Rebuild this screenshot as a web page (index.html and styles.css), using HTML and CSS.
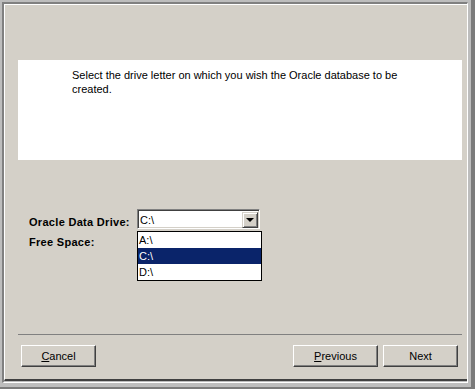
FILE: index.html
```html
<!DOCTYPE html>
<html lang="en">
<head>
    <meta charset="UTF-8">
    <meta name="viewport" content="width=device-width, initial-scale=1.0">
    <title>Oracle Data Drive</title>
    <link rel="stylesheet" href="styles.css">
</head>
<body>

    <!-- Window frame -->
    <div class="window">
        <div class="well">
            <div class="panel">

                <!-- Info box -->
                <div class="info">
                    <p class="info-text">Select the drive letter on which you wish the Oracle database to be created.</p>
                </div>

                <!-- Drive form -->
                <div class="form">
                    <label class="label">Oracle Data Drive:</label>
                    <div class="combo">
                        <span class="combo-value">C:\</span>
                        <span class="combo-arrow"><span class="tri"></span></span>

                        <ul class="dropdown">
                            <li>A:\</li>
                            <li class="selected">C:\</li>
                            <li>D:\</li>
                        </ul>
                    </div>

                    <label class="label">Free Space:</label>
                    <div></div>
                </div>

                <!-- Footer -->
                <div class="footer">
                    <div class="separator"></div>
                    <div class="buttons">
                        <button class="btn"><u>C</u>ancel</button>
                        <span class="spacer"></span>
                        <button class="btn btn-wide"><u>P</u>revious</button>
                        <button class="btn">Next</button>
                    </div>
                </div>

            </div>
        </div>
    </div>

</body>
</html>
```

FILE: styles.css
```css
/* General Styling */
* {
    box-sizing: border-box;
}

body {
    margin: 0;
    padding: 0;
    font-family: 'Liberation Sans', Arial, sans-serif;
    font-size: 11px;
    color: #000;
    background: #bdbdbd;
}

/* Window frame */
.window {
    width: 475px;
    height: 389px;
    background: #bdbdbd;
    padding: 2px 3px 4px 2px;
    border-right: 4px solid #7b7b7b;
    border-bottom: 2px solid #7b7b7b;
}

.well {
    height: 100%;
    background: #bdbdbd;
    border-top: 2px solid #808080;
    border-left: 2px solid #808080;
    border-right: 1px solid #fff;
    border-bottom: 1px solid #fff;
    padding-bottom: 1px;
}

.panel {
    height: 100%;
    background: #d4d0c8;
    border-top: 1px solid #fff;
    border-left: 1px solid #fff;
    border-bottom: 2px solid #404040;
    display: flex;
    flex-direction: column;
}

/* Info box */
.info {
    background: #fff;
    height: 100px;
    margin: 55px 5px 0 13px;
    padding: 8px 0 0 54px;
}

.info-text {
    margin: 0;
    width: 340px;
    line-height: 14px;
}

/* Form */
.form {
    display: grid;
    grid-template-columns: 108px 123px;
    grid-template-rows: 20px 21px;
    margin: 49px 0 0 24px;
}

.label {
    font-weight: bold;
    letter-spacing: 0.3px;
    line-height: 20px;
    padding-top: 3px;
}

.combo {
    position: relative;
    background: #fff;
    border-top: 1px solid #808080;
    border-left: 1px solid #808080;
    border-right: 1px solid #fff;
    border-bottom: 1px solid #fff;
    box-shadow: inset 1px 1px 0 #404040, inset -1px -1px 0 #d4d0c8;
    display: flex;
    align-items: center;
    padding: 2px 1px 1px 2px;
}

.combo-value {
    flex: 1;
    padding-top: 1px;
}

.combo-arrow {
    width: 16px;
    height: 16px;
    background: #d4d0c8;
    border-top: 1px solid #d4d0c8;
    border-left: 1px solid #d4d0c8;
    border-right: 1px solid #404040;
    border-bottom: 1px solid #404040;
    box-shadow: inset 1px 1px 0 #fff, inset -1px -1px 0 #808080;
    display: flex;
    align-items: center;
    justify-content: center;
}

.tri {
    width: 0;
    height: 0;
    border-left: 4px solid transparent;
    border-right: 4px solid transparent;
    border-top: 4px solid #000;
}

/* Dropdown list (open) */
.dropdown {
    position: absolute;
    top: 21px;
    left: -1px;
    width: 125px;
    margin: 0;
    padding: 0;
    list-style: none;
    background: #fff;
    border: 1px solid #000;
}

.dropdown li {
    height: 16px;
    line-height: 16px;
    padding-left: 1px;
}

.dropdown li.selected {
    background: #0a246a;
    color: #fff;
}

/* Footer */
.footer {
    margin-top: auto;
    padding: 0 0 12px 0;
}

.separator {
    height: 1px;
    background: #808080;
    margin: 0 5px 10px 13px;
}

.buttons {
    display: flex;
    gap: 5px;
    padding: 0 9px 0 16px;
}

.spacer {
    flex: 1;
}

.btn {
    width: 75px;
    height: 22px;
    padding: 0;
    font-family: inherit;
    font-size: 11px;
    color: #000;
    background: #d4d0c8;
    border-top: 1px solid #fff;
    border-left: 1px solid #fff;
    border-right: 1px solid #404040;
    border-bottom: 1px solid #404040;
    box-shadow: inset -1px -1px 0 #808080;
}

.btn-wide {
    width: 85px;
}
```
